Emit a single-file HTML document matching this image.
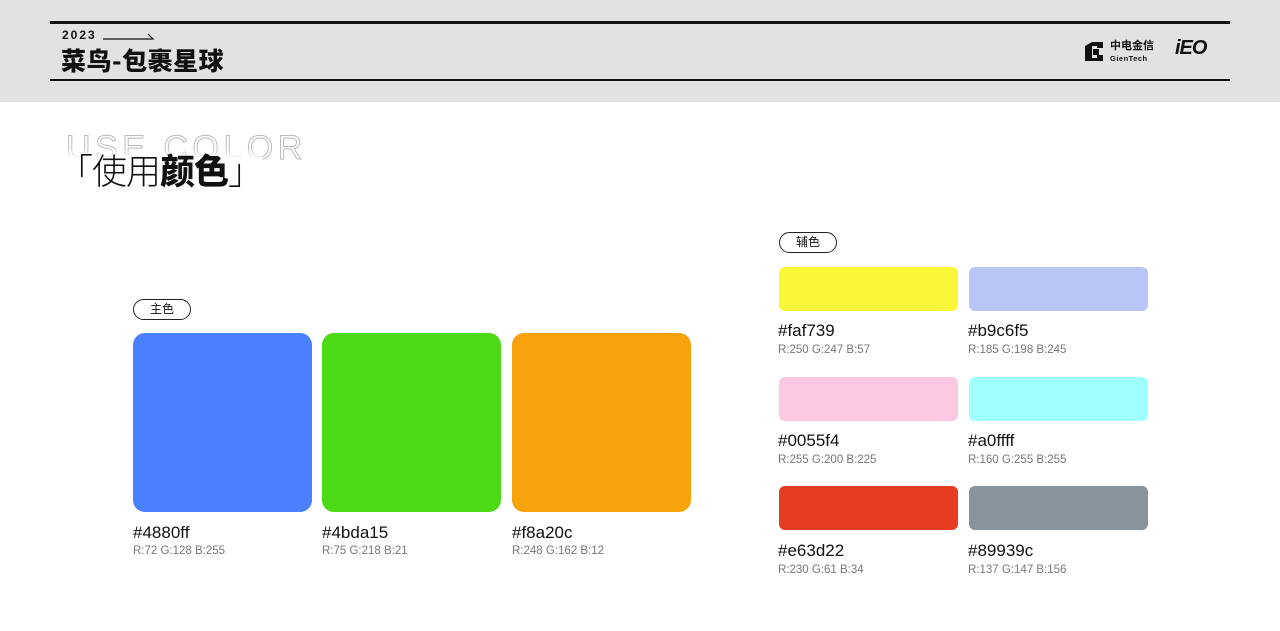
<!DOCTYPE html>
<html><head><meta charset="utf-8"><style>
*{margin:0;padding:0;box-sizing:border-box}
body{width:1280px;height:631px;background:#fff;position:relative;overflow:hidden;font-family:"Liberation Sans","Noto Sans CJK SC",sans-serif;color:#111}
.hdr{position:absolute;left:0;top:0;width:1280px;height:102px;background:#e2e2e2}
.l1{position:absolute;left:50px;top:21px;width:1180px;height:3px;background:#111}
.l2{position:absolute;left:50px;top:79px;width:1180px;height:2px;background:#111}
.abs{position:absolute}
.pill{position:absolute;border:1px solid #222;border-radius:11px;font-size:12px;text-align:center;line-height:19px;height:21px;width:58px}
.big{position:absolute;top:333px;width:179px;height:179px;border-radius:12px}
.sm{position:absolute;width:179px;height:44px;border-radius:6px}
.hex{position:absolute;font-size:17px;color:#111}
.rgb{position:absolute;font-size:11.5px;color:#777}
</style></head><body>
<div class="hdr"></div>
<div class="l1"></div><div class="l2"></div>
<div class="abs" style="left:62px;top:28px;font-size:12px;font-weight:bold;letter-spacing:2px">2023</div>
<svg class="abs" style="left:103px;top:33px" width="52" height="8"><path d="M0 6H50L45 1" stroke="#111" fill="none" stroke-width="1.2"/></svg>
<div class="abs" style="left:61px;top:44px;font-size:25px;font-weight:900;letter-spacing:0.5px;font-family:'Noto Sans CJK SC',sans-serif;line-height:32px">菜鸟-包裹星球</div>
<svg class="abs" style="left:1082px;top:40px" width="24" height="24"><path d="M3 6 L10 2 H21 V8 H15 V6 H10 V18 H15 V15 H21 V21 H3 Z" fill="#111"/><rect x="11" y="9" width="6" height="6" fill="#111"/></svg>
<div class="abs" style="left:1110px;top:40px;font-size:11px;font-weight:bold;line-height:12px">中电金信</div>
<div class="abs" style="left:1110px;top:54px;font-size:7.5px;font-weight:bold;letter-spacing:.5px">GienTech</div>
<div class="abs" style="left:1175px;top:37px;font-size:20px;font-weight:900;font-style:italic;letter-spacing:-1px">iEO</div>
<div class="abs" style="left:66px;top:128px;font-size:34px;letter-spacing:4.5px;color:transparent;-webkit-text-stroke:1px #bbb;line-height:40px">USE COLOR</div>
<div class="abs" style="left:58px;top:148px;font-size:35px;letter-spacing:-1px;line-height:44px;font-family:'Noto Sans CJK SC',sans-serif;background:linear-gradient(#fff0,#fff 25%)"><span style="font-weight:300">「使用</span><span style="font-weight:900">颜色</span><span style="font-weight:300">」</span></div>

<div class="pill" style="left:133px;top:299px">主色</div>
<div class="pill" style="left:779px;top:232px">辅色</div>

<div class="big" style="left:133px;background:#4880ff"></div>
<div class="big" style="left:322px;background:#4bda15"></div>
<div class="big" style="left:512px;background:#f8a20c"></div>
<div class="hex" style="left:133px;top:523px">#4880ff</div><div class="rgb" style="left:133px;top:545px">R:72 G:128 B:255</div>
<div class="hex" style="left:322px;top:523px">#4bda15</div><div class="rgb" style="left:322px;top:545px">R:75 G:218 B:21</div>
<div class="hex" style="left:512px;top:523px">#f8a20c</div><div class="rgb" style="left:512px;top:545px">R:248 G:162 B:12</div>

<div class="sm" style="left:779px;top:267px;background:#faf739"></div>
<div class="sm" style="left:969px;top:267px;background:#b9c6f5"></div>
<div class="sm" style="left:779px;top:377px;background:#fdc8e1"></div>
<div class="sm" style="left:969px;top:377px;background:#a0ffff"></div>
<div class="sm" style="left:779px;top:486px;background:#e63d22"></div>
<div class="sm" style="left:969px;top:486px;background:#89939c"></div>

<div class="hex" style="left:778px;top:321px">#faf739</div><div class="rgb" style="left:778px;top:344px">R:250 G:247 B:57</div>
<div class="hex" style="left:968px;top:321px">#b9c6f5</div><div class="rgb" style="left:968px;top:344px">R:185 G:198 B:245</div>
<div class="hex" style="left:778px;top:431px">#0055f4</div><div class="rgb" style="left:778px;top:454px">R:255 G:200 B:225</div>
<div class="hex" style="left:968px;top:431px">#a0ffff</div><div class="rgb" style="left:968px;top:454px">R:160 G:255 B:255</div>
<div class="hex" style="left:778px;top:541px">#e63d22</div><div class="rgb" style="left:778px;top:564px">R:230 G:61 B:34</div>
<div class="hex" style="left:968px;top:541px">#89939c</div><div class="rgb" style="left:968px;top:564px">R:137 G:147 B:156</div>
</body></html>
